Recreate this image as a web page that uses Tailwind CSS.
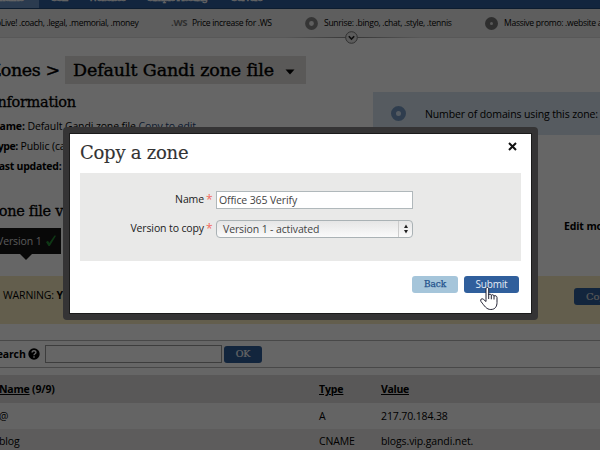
<!DOCTYPE html>
<html lang="en">
<head>
<meta charset="utf-8">
<title>Zones</title>
<script src="https://cdn.jsdelivr.net/npm/@tailwindcss/browser@4"></script>
</head>
<body class="w-[600px] h-[450px] overflow-hidden relative bg-white font-['Open_Sans',sans-serif] text-[10.5px] tracking-[-0.12px] text-black whitespace-nowrap">
<div class="w-[600px] h-[450px] overflow-hidden">
  <nav class="h-[9px] flex overflow-hidden bg-[#2d5d9c] border-b border-[#1f4677] text-white font-['DejaVu_Serif',serif] text-[10px] leading-[12px] tracking-[-0.5px] [-webkit-text-stroke:0.3px]">
    <div class="w-[39px] h-[9px] bg-[#6d95c6] shrink-0"><div class="-mt-[8px] -ml-[17px]">Domains</div></div>
    <div class="-mt-[8px] ml-[12px] w-[37px] tracking-[-1.5px]">SSL</div>
    <div class="-mt-[8px] w-[59px] tracking-[-1px]">Websites</div>
    <div class="-mt-[8px] w-[84px] tracking-[-1.3px]">Simple Hosting</div>
    <div class="-mt-[8px] tracking-[-1.2px]">Servers</div>
  </nav>
  <div class="h-[29px] flex items-center bg-[#ebebeb] border-b border-[#dcdcdc] text-[8.6px] tracking-[-0.31px] *:shrink-0">
    <div class="-ml-[4px] w-[175px] tracking-[-0.34px]">oLive! .coach, .legal, .memorial, .money</div>
    <div class="w-[21px] font-bold text-[#777] text-[9.5px]">.WS</div>
    <div class="w-[113px]">Price increase for .WS</div>
    <svg class="w-[13px] h-[13px]" viewBox="0 0 13 13"><circle cx="6.5" cy="6.5" r="4.4" fill="#eee" stroke="#858585" stroke-width="4"/></svg>
    <div class="ml-[6px] w-[155px]">Sunrise: .bingo, .chat, .style, .tennis</div>
    <svg class="w-[13px] h-[13px] ml-[6px]" viewBox="0 0 13 13"><circle cx="6.5" cy="6.5" r="4" fill="#ddd" stroke="#747474" stroke-width="5"/></svg>
    <div class="ml-[6px]">Massive promo: .website and more</div>
  </div>
  <div class="h-0 relative">
    <div class="absolute left-[285px] -top-px w-[135px] h-px bg-linear-to-r from-transparent via-[#888] to-transparent"></div>
    <svg class="absolute left-[345px] -top-[7px] w-[13px] h-[13px]" viewBox="0 0 13 13"><circle cx="6.5" cy="6.5" r="5.8" fill="#e5e5e5" stroke="#777"/><path d="M3.8 5.2L6.5 8L9.2 5.2" fill="none" stroke="#222" stroke-width="1.6"/></svg>
  </div>
  <div class="h-[46px] pt-[18px] flex font-['DejaVu_Serif',serif] text-[17.5px] leading-[28px] [-webkit-text-stroke:0.4px]">
    <div class="w-[65px]"><div class="-ml-[11px] tracking-[-0.4px]">Zones &gt;</div></div>
    <div class="w-[241px] h-[28px] bg-[#e0dfdb] pl-[8px] flex items-center"><span class="w-[212px] tracking-[-0.12px]">Default Gandi zone file</span><svg class="w-[10px] h-[6px] mt-[4px]" viewBox="0 0 10 6"><path d="M0.5 0.5H9.5L5 5.5Z"/></svg></div>
  </div>
  <div class="h-[192px] flex justify-between">
    <div class="w-[300px] leading-[20px]">
      <h2 class="h-[32px] pt-[8px] -ml-[8px] font-['DejaVu_Serif',serif] text-[14.5px] tracking-[-0.3px] [-webkit-text-stroke:0.3px]">Information</h2>
      <div class="-ml-[9px]"><b>Name:</b> Default Gandi zone file <span class="text-[#224477] underline">Copy to edit</span></div>
      <div class="-ml-[8px]"><b class="tracking-[-0.4px]">Type:</b> Public (ca</div>
      <div class="-ml-[7px]"><b class="tracking-[-0.25px]">Last updated:</b></div>
      <h2 class="h-[52px] pt-[25px] -ml-[11px] font-['DejaVu_Serif',serif] text-[14.5px] tracking-[-0.3px] [-webkit-text-stroke:0.3px]">Zone file v</h2>
      <div class="w-[61px] h-[26px] bg-[#151515] text-[#ddd] leading-[26px] flex items-center relative"><span class="-ml-[3px] w-[48px] shrink-0">Version 1</span><svg class="w-[12px] h-[12px] shrink-0" viewBox="0 0 12 12"><path d="M1 7L3 5.8L4.3 8L9.5 0.5L11 0.8L4.8 11L3.5 11Z" fill="#258b35"/></svg>
        <svg class="absolute left-[20px] top-[26px] w-[12px] h-[6px]" viewBox="0 0 12 6"><path d="M0 0H12L6 6Z" fill="#151515"/></svg></div>
    </div>
    <div class="w-[227px]">
      <div class="mt-[8px] h-[43px] bg-[#d6e4ef] flex items-center *:shrink-0"><svg class="ml-[18px] w-[15px] h-[15px]" viewBox="0 0 15 15"><circle cx="7.5" cy="7.5" r="5" fill="#d8e6f5" stroke="#779ac2" stroke-width="5"/></svg><span class="ml-[19px] mt-[2px] text-[10.5px] tracking-[-0.12px]">Number of domains using this zone:</span></div>
      <div class="mt-[84px] ml-[191px] font-bold">Edit mode</div>
    </div>
  </div>
  <div class="h-[48px] bg-[#f8ecc0] flex *:shrink-0"><span class="ml-[3px] mt-[12px] w-[571px]">WARNING: <b>Y</b></span><span class="mt-[12px] w-[60px] h-[17px] rounded-[3px] bg-[#2f5d98] text-[#ddd] pl-[12px] leading-[17px] font-['DejaVu_Serif',serif] text-[10px] [-webkit-text-stroke:0.2px]">Copy</span></div>
  <div class="mt-[16px] h-[28px] border-y border-[#b5b5b5] flex items-center *:shrink-0"><b class="-ml-[9px] mt-px w-[37px]">Search</b>
    <svg class="w-[12px] h-[12px]" viewBox="0 0 12 12"><circle cx="6" cy="6" r="5.7"/><path d="M4.1 4.6C4.1 2.1 7.9 2.1 7.9 4.4C7.9 5.8 6 5.7 6 7.3M6 8.3V9.7" fill="none" stroke="#fff" stroke-width="1.4"/></svg>
    <span class="ml-[5px] w-[177px] h-[18px] border border-[#999] bg-white"></span><span class="ml-[2px] w-[38px] h-[17px] rounded-[3px] bg-[#2f5d98] text-white text-center leading-[16px] font-['DejaVu_Serif',serif] text-[9.5px] [-webkit-text-stroke:0.2px]">OK</span></div>
  <div class="mt-[7px] pt-[2px] h-[28px] bg-[#dedddb] flex items-center font-bold"><span class="-ml-px w-[320px] tracking-[-0.2px]"><u>Name</u> (9/9)</span><u class="w-[62px]">Type</u><u class="tracking-[-0.3px]">Value</u></div>
  <div class="pt-px h-[26px] bg-[#f9f9f9] flex items-center"><span class="-ml-px w-[320px]">@</span><span class="w-[62px]">A</span><span>217.70.184.38</span></div>
  <div class="pt-px h-[25px] bg-[#e8e7e5] flex items-center"><span class="-ml-px w-[320px]">blog</span><span class="w-[62px]">CNAME</span><span>blogs.vip.gandi.net.</span></div>
</div>
<div class="absolute inset-0 bg-black/60"></div>
<section class="absolute left-[63px] top-[127px] w-[475px] h-[193px] rounded-[4px] bg-[#353435] p-[6px]">
  <div class="w-[463px] h-[181px] bg-white border border-[#1b1b1b] pl-[10px] pr-[10px]">
    <header class="h-[39px] flex justify-between"><h1 class="pt-[7px] font-['DejaVu_Serif',serif] text-[18px] leading-[24px] tracking-[-0.25px] text-[#333] [-webkit-text-stroke:0.15px]">Copy a zone</h1><svg class="mt-[8px] mr-[4px] w-[9px] h-[9px]" viewBox="0 0 9 9"><path d="M1 1L8 8M8 1L1 8" stroke="#111" stroke-width="2"/></svg></header>
    <div class="h-[88px] w-[441px] bg-[#e9e9e8] pt-[18px] text-[#222]">
      <div class="h-[18px] flex items-center *:shrink-0"><span class="w-[124px] text-right">Name</span><span class="w-[12px] pl-[2px] text-[12px] text-[#f36a60]">*</span><span class="w-[197px] h-[18px] border border-[#b0b8bb] bg-white pl-[2px] leading-[17px] text-[#444] tracking-[-0.12px]">Office 365 Verify</span></div>
      <div class="mt-[11px] h-[18px] flex items-center *:shrink-0"><span class="w-[124px] text-right">Version to copy</span><span class="w-[12px] pl-[2px] text-[12px] text-[#f36a60]">*</span><span class="w-[197px] h-[18px] border border-[#aab2b5] rounded-[4px] bg-linear-to-b from-[#e6e6e6] to-[#fafafa] pl-[6px] leading-[17px] text-[#444] flex justify-between"><span>Version 1 - activated</span><span class="w-[14px] border-l border-[#ccc] flex items-center justify-center"><svg class="w-[6px] h-[10px]" viewBox="0 0 6 10"><path d="M1 4L3 0.5L5 4ZM1 6L3 9.5L5 6Z" fill="#222"/></svg></span></span></div>
    </div>
    <footer class="mt-[15px] flex justify-end gap-[6px] text-center leading-[16px]"><span class="w-[46px] h-[17px] rounded-[3px] bg-[#a5c5da] text-[#23528c] font-['DejaVu_Serif',serif] text-[9px] [-webkit-text-stroke:0.25px]">Back</span><span class="mr-[2px] w-[55px] h-[17px] rounded-[3px] bg-[#305f9c] text-[#e4ecf5] text-[10px] tracking-[-0.2px]">Submit</span></footer>
  </div>
</section>
<svg class="absolute left-[480px] top-[286px] w-[18px] h-[25px]" viewBox="0 0 18 25"><path d="M6 13.5V3C6 1 8.7 1 8.7 3V9C9 7.7 11 7.8 11.3 9.3C12 8.3 13.8 8.6 14 10C15.2 9.2 17 10 17 11.5V16.5C17 20 15.5 23.5 10.8 23.5C6.5 23.5 4.5 20 1 15.5C-0.2 13.4 1.8 12 3.3 13.2L6 15.5Z" fill="#fff" stroke="#223" stroke-width="1"/><path d="M8.7 8.5V13M11.3 9.3V13.3M14 10V13.5" stroke="#223" fill="none"/></svg>
</body>
</html>
